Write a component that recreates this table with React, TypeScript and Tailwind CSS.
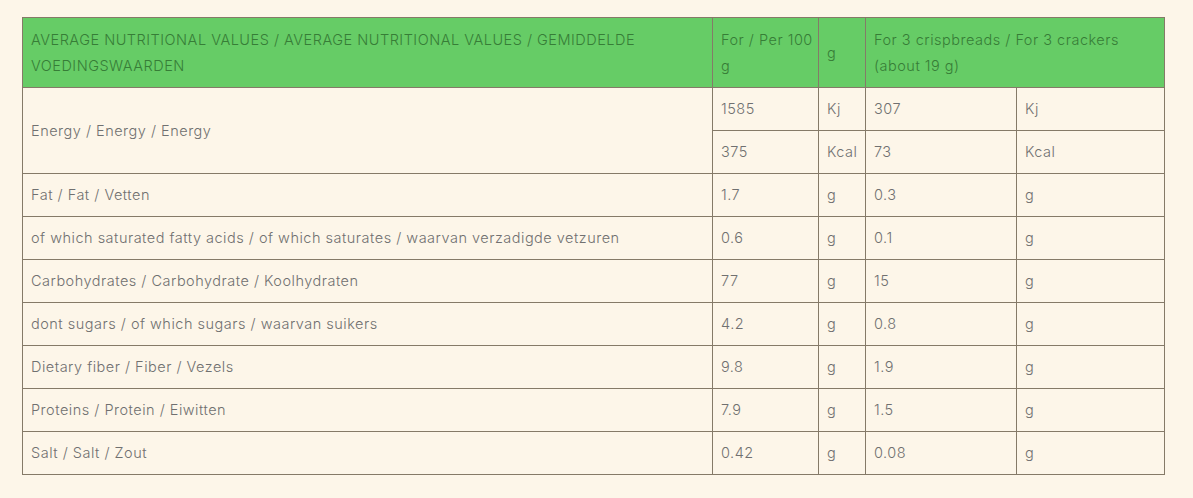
import React from "react";

const rows: [string, string, string, string, string][] = [
  ["Fat / Fat / Vetten", "1.7", "g", "0.3", "g"],
  ["of which saturated fatty acids / of which saturates / waarvan verzadigde vetzuren", "0.6", "g", "0.1", "g"],
  ["Carbohydrates / Carbohydrate / Koolhydraten", "77", "g", "15", "g"],
  ["dont sugars / of which sugars / waarvan suikers", "4.2", "g", "0.8", "g"],
  ["Dietary fiber / Fiber / Vezels", "9.8", "g", "1.9", "g"],
  ["Proteins / Protein / Eiwitten", "7.9", "g", "1.5", "g"],
  ["Salt / Salt / Zout", "0.42", "g", "0.08", "g"],
];

const td = "border border-[#857a68] px-2 py-2 align-middle";
const th = "border border-[#857a68] px-2 py-[8.5px] align-middle";

export default function App() {
  return (
    <div
      className="min-h-[498px] w-full bg-[#fdf6e9] pl-[22px] pt-[17px] text-[14.5px] font-light leading-[26px] tracking-[0.5px] text-[#707070]"
      style={{ fontFamily: "Inter, 'Noto Sans', sans-serif" }}
    >
      <table className="w-[1142px] table-fixed border-collapse">
        <colgroup>
          <col className="w-[690px]" />
          <col className="w-[106px]" />
          <col className="w-[47px]" />
          <col className="w-[151px]" />
          <col className="w-[148px]" />
        </colgroup>
        <thead>
          <tr className="bg-[#66cc66] text-[#377d37]">
            <td className={th}>
              AVERAGE NUTRITIONAL VALUES / AVERAGE NUTRITIONAL VALUES / GEMIDDELDE VOEDINGSWAARDEN
            </td>
            <td className={`${th} whitespace-nowrap pr-0`}>
              For / Per 100
              <br />g
            </td>
            <td className={th}>g</td>
            <td className={th} colSpan={2}>
              For 3 crispbreads / For 3 crackers (about 19 g)
            </td>
          </tr>
        </thead>
        <tbody>
          <tr>
            <td className={td} rowSpan={2}>
              Energy / Energy / Energy
            </td>
            <td className={td}>1585</td>
            <td className={td}>Kj</td>
            <td className={td}>307</td>
            <td className={td}>Kj</td>
          </tr>
          <tr>
            <td className={td}>375</td>
            <td className={td}>Kcal</td>
            <td className={td}>73</td>
            <td className={td}>Kcal</td>
          </tr>
          {rows.map((r) => (
            <tr key={r[0]}>
              {r.map((c, i) => (
                <td key={i} className={td}>
                  {c}
                </td>
              ))}
            </tr>
          ))}
        </tbody>
      </table>
    </div>
  );
}
